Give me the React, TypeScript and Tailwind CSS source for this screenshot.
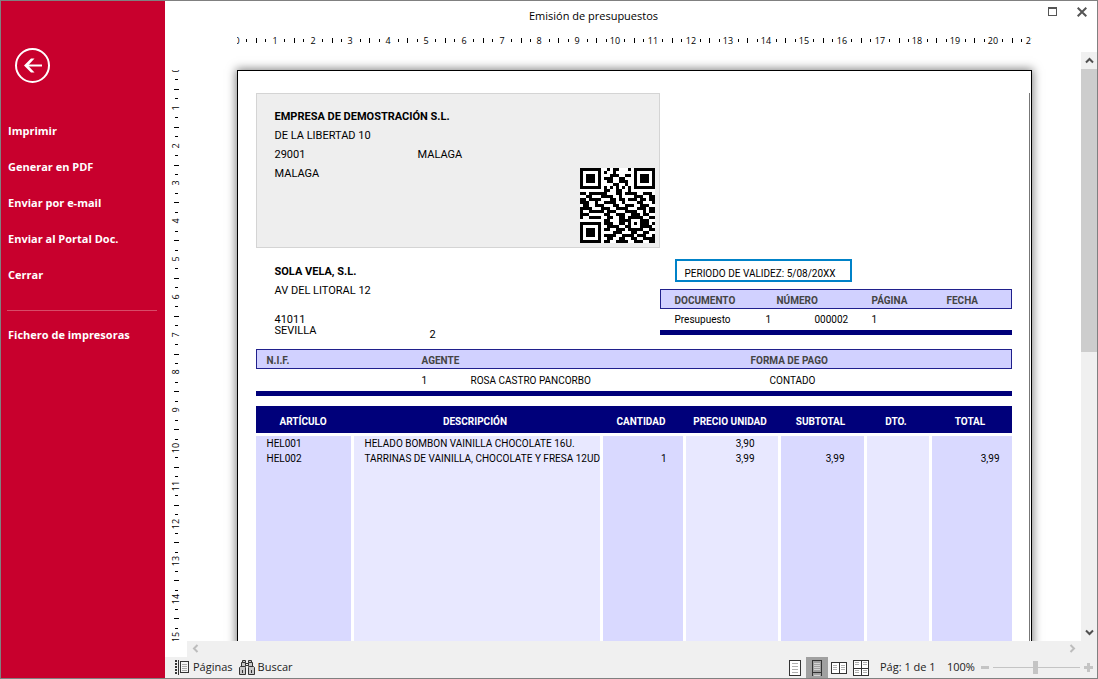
import type { ReactNode } from 'react'

// ── data ───────────────────────────────────────────────────────────────────

const MENU = ['Imprimir', 'Generar en PDF', 'Enviar por e-mail', 'Enviar al Portal Doc.', 'Cerrar']

const COLUMNS = [
  { title: 'ARTÍCULO', width: 'w-[95px]', cell: 'bg-[#d9d9ff] pl-[11px] text-left' },
  { title: 'DESCRIPCIÓN', width: 'w-[249px]', cell: 'border-l-[3px] bg-[#e8e8ff] pl-[11px] text-left' },
  { title: 'CANTIDAD', width: 'w-[83px]', cell: 'border-l-[3px] bg-[#d9d9ff] pr-4 text-right' },
  { title: 'PRECIO UNIDAD', width: 'w-[95px]', cell: 'border-l-[3px] bg-[#e8e8ff] pr-[23px] text-right' },
  { title: 'SUBTOTAL', width: 'w-[86px]', cell: 'border-l-[3px] bg-[#d9d9ff] pr-[19px] text-right' },
  { title: 'DTO.', width: 'w-[65px]', cell: 'border-l-[3px] bg-[#e8e8ff] pr-3 text-right' },
  { title: 'TOTAL', width: 'w-[83px]', cell: 'border-l-[3px] bg-[#d9d9ff] pr-3 text-right' },
]

const LINES = [
  ['HEL001', 'HELADO BOMBON VAINILLA CHOCOLATE 16U.', '', '3,90', '', '', ''],
  ['HEL002', 'TARRINAS DE VAINILLA, CHOCOLATE Y FRESA 12UD', '1', '3,99', '3,99', '', '3,99'],
]

const QR = [
  '1111111001011000101111111',
  '1000001010010000001000001',
  '1011101000111001101011101',
  '1011101011100110001011101',
  '1011101001100111001011101',
  '1000001000011001001000001',
  '1111111010101010101111111',
  '0000000011001100100000000',
  '1101111110001101111001110',
  '0011000111100100001110011',
  '1101111000110110111011011',
  '1110010011110010000110001',
  '0110011100011001110011100',
  '1111000111001111000111011',
  '1001111101110001111001011',
  '1110000011001110011101100',
  '1001111001100110111110011',
  '0000000011000111100011100',
  '1111111011100110101011101',
  '1000001001111001100011110',
  '1011101011001110111110011',
  '1011101000011100011001100',
  '1011101011110011110111001',
  '1000001001100110011001111',
  '1111111011001111001110011',
]

// ── rulers ─────────────────────────────────────────────────────────────────

const CM = 37.8

function Ruler({ length, count, vertical }: { length: number; count: number; vertical?: boolean }) {
  const marks = Array.from({ length: count * 4 + 1 }, (_, i) => i)
  return (
    <svg
      width={vertical ? 20 : length}
      height={vertical ? length : 20}
      className="block shrink-0 font-['Open_Sans',sans-serif] text-[9px]"
      shapeRendering="crispEdges"
    >
      {marks.map((i) => {
        const p = Math.round((i * CM) / 4)
        if (i % 4 === 0) {
          return vertical ? (
            <text key={i} transform={`translate(14 ${p}) rotate(-90)`} textAnchor="middle">{i / 4}</text>
          ) : (
            <text key={i} x={p} y={13} textAnchor="middle">{i / 4}</text>
          )
        }
        const size = i % 2 ? 3 : 5
        return vertical ? (
          <rect key={i} x={i % 2 ? 10 : 9} y={p} width={size} height={1} />
        ) : (
          <rect key={i} x={p} y={i % 2 ? 8 : 7} width={1} height={size} />
        )
      })}
    </svg>
  )
}

// ── icons ──────────────────────────────────────────────────────────────────

function QrCode() {
  return (
    <svg width="75" height="75" viewBox="0 0 25 25" shapeRendering="crispEdges" className="shrink-0 bg-white">
      {QR.map((row, y) =>
        [...row].map((c, x) => (c === '1' ? <rect key={`${x}-${y}`} x={x} y={y} width="1" height="1" /> : null)),
      )}
    </svg>
  )
}

function Chevron({ d, color }: { d: string; color: string }) {
  return (
    <svg width="9" height="9" viewBox="0 0 9 9" fill="none" stroke={color} strokeWidth="2">
      <path d={d} />
    </svg>
  )
}

function PagesIcon() {
  return (
    <svg width="14" height="15" viewBox="0 0 14 15" fill="none" shapeRendering="crispEdges">
      <path d="M1 0v15" stroke="#333" strokeWidth="2" strokeDasharray="2 1" />
      <path d="M3.5 0v15" stroke="#333" />
      <rect x="5.5" y="1.5" width="8" height="11" fill="#f4f4f4" stroke="#333" />
      <path d="M7 4.5h5M7 6.5h5M7 8.5h5M7 10.5h5" stroke="#aaa" />
    </svg>
  )
}

function BinocularsIcon() {
  return (
    <svg width="16" height="17" viewBox="0 0 16 17" fill="#c8c8c8" stroke="#333">
      <path d="M2.5 3.5h4v4h-4zM9.5 3.5h4v4h-4z" />
      <path d="M3.5 1.5h3v2h-3zM9.5 1.5h3v2h-3z" />
      <path d="M6.5 4.5h3v2h-3z" fill="#eee" />
      <path d="M.5 8.5l1-1h4l1 1v7h-6zM9.5 8.5l1-1h4l1 1v7h-6z" />
      <path d="M3.5 11v3M12.5 11v3" />
    </svg>
  )
}

function SinglePageIcon() {
  return (
    <svg width="12" height="16" viewBox="0 0 12 16" fill="none" shapeRendering="crispEdges">
      <rect x=".5" y=".5" width="11" height="15" fill="#fff" stroke="#333" />
      <path d="M3 3.5h6M3 6.5h6M3 9.5h6M3 12.5h6" stroke="#b0b0b0" />
    </svg>
  )
}

function ContinuousIcon() {
  return (
    <svg width="10" height="16" viewBox="0 0 10 16" fill="none" shapeRendering="crispEdges">
      <path d="M.5 16V.5h9V16M.5 12.5h9" stroke="#333" />
      <path d="M2 3.5h6M2 5.5h6M2 7.5h6M2 9.5h6M2 15.5h6" stroke="#d4d4d4" />
    </svg>
  )
}

function TwoPagesIcon() {
  return (
    <svg width="16" height="12" viewBox="0 0 16 12" fill="none" shapeRendering="crispEdges">
      <path d="M.5.5h15v11H.5zM8 .5v11" fill="#fff" stroke="#333" />
      <path d="M2 3.5h4M2 5.5h4M2 7.5h4M10 3.5h4M10 5.5h4M10 7.5h4" stroke="#b0b0b0" />
    </svg>
  )
}

function FourPagesIcon() {
  return (
    <svg width="16" height="16" viewBox="0 0 16 16" fill="none" shapeRendering="crispEdges">
      <path d="M.5.5h15v15H.5zM8 .5v15M.5 8h15" fill="#fff" stroke="#333" />
      <path d="M2 2.5h4M2 4.5h4M10 2.5h4M10 4.5h4M2 10.5h4M2 12.5h4M10 10.5h4M10 12.5h4" stroke="#b0b0b0" />
    </svg>
  )
}

// ── window parts ───────────────────────────────────────────────────────────

function Sidebar() {
  return (
    <nav className="flex w-[164px] shrink-0 flex-col bg-[#c8002d] pt-[47px] text-[11px] font-bold text-white">
      <button aria-label="Volver" className="ml-[14px] w-[35px]">
        <svg width="35" height="35" viewBox="0 0 35 35" fill="none" stroke="#fff">
          <circle cx="17.5" cy="17.5" r="16.5" strokeWidth="2" />
          <path d="M11 17.5h16" strokeWidth="2" />
          <path d="M9 17.5l7-7h3.5l-6.5 7 6.5 7H16z" fill="#fff" stroke="none" />
        </svg>
      </button>
      <div className="mt-[30px] flex flex-col">
        {MENU.map((label) => (
          <button key={label} className="h-9 pl-[7px] text-left">{label}</button>
        ))}
      </div>
      <hr className="ml-[6px] mr-2 mt-[17px] border-[#d84b68]" />
      <button className="mt-[6px] h-9 pl-[7px] text-left">Fichero de impresoras</button>
    </nav>
  )
}

function TitleBar() {
  return (
    <header className="flex h-[30px] items-center">
      <h1 className="flex-1 pr-[26px] text-center text-[11px]">Emisión de presupuestos</h1>
      <div className="mr-[10px] flex items-start gap-5 pb-2">
        <button aria-label="Maximizar">
          <svg width="9" height="9" viewBox="0 0 9 9" fill="none" stroke="#555" shapeRendering="crispEdges">
            <path d="M.5.5h8v8h-8zM0 1.5h9" />
          </svg>
        </button>
        <button aria-label="Cerrar ventana">
          <svg width="10" height="10" viewBox="0 0 10 10" stroke="#555" strokeWidth="2">
            <path d="M.7.7l8.6 8.6M9.3.7L.7 9.3" />
          </svg>
        </button>
      </div>
    </header>
  )
}

function Band({ children, className }: { children: ReactNode; className?: string }) {
  return (
    <th className={`h-5 border-y border-[#20208c] bg-[#d1d1ff] pt-[2px] text-left font-bold text-[#444] ${className}`}>
      {children}
    </th>
  )
}

function Company() {
  return (
    <section className="flex h-[155px] w-[404px] items-end justify-between border border-[#d4d4d4] bg-[#eee] pb-1 pl-[18px] pr-1 text-[11px] leading-[19px]">
      <div className="self-start pt-[13px]">
        <p className="font-bold">EMPRESA DE DEMOSTRACIÓN S.L.</p>
        <p>DE LA LIBERTAD 10</p>
        <p className="flex">
          <span className="w-[143px]">29001</span>
          <span>MALAGA</span>
        </p>
        <p>MALAGA</p>
      </div>
      <QrCode />
    </section>
  )
}

function DocumentInfo() {
  return (
    <div className="w-[352px] pt-[11px]">
      <p className="ml-[15px] h-[23px] w-[177px] border-2 border-[#0082c8] pl-2 pt-1 leading-[18px]">
        PERIODO DE VALIDEZ: 5/08/20XX
      </p>
      <table className="mt-[7px] w-full table-fixed border-separate border-spacing-0 border-b-[5px] border-[#00007a]">
        <thead>
          <tr>
            <Band className="w-[106px] border-l pl-[14px]">DOCUMENTO</Band>
            <Band className="w-[106px] pl-[11px]">NÚMERO</Band>
            <Band className="w-[75px]">PÁGINA</Band>
            <Band className="border-r">FECHA</Band>
          </tr>
        </thead>
        <tbody>
          <tr className="h-[21px]">
            <td className="pl-[15px]">Presupuesto</td>
            <td>
              <span className="inline-block w-[49px]">1</span>
              000002
            </td>
            <td>1</td>
            <td />
          </tr>
        </tbody>
      </table>
    </div>
  )
}

function AgentInfo() {
  return (
    <table className="mt-[13px] w-full table-fixed border-separate border-spacing-0 border-b-[5px] border-[#00007a]">
      <thead>
        <tr>
          <Band className="w-[166px] border-l pl-[10px]">N.I.F.</Band>
          <Band className="w-[329px]">AGENTE</Band>
          <Band className="border-r">FORMA DE PAGO</Band>
        </tr>
      </thead>
      <tbody>
        <tr className="h-[22px]">
          <td />
          <td>
            <span className="inline-block w-[49px]">1</span>
            ROSA CASTRO PANCORBO
          </td>
          <td className="pl-[19px]">CONTADO</td>
        </tr>
      </tbody>
    </table>
  )
}

function LinesTable() {
  return (
    <table className="mt-[10px] w-full table-fixed border-separate border-spacing-0">
      <thead>
        <tr className="h-[27px] bg-[#00007a] text-white">
          {COLUMNS.map((c) => (
            <th key={c.title} className={`${c.width} whitespace-nowrap pt-1 font-bold`}>{c.title}</th>
          ))}
        </tr>
        <tr className="h-[3px]" />
      </thead>
      <tbody>
        {LINES.map((line) => (
          <tr key={line[0]} className="h-[15px]">
            {COLUMNS.map((c, i) => (
              <td key={c.title} className={`whitespace-nowrap border-white ${c.cell}`}>{line[i]}</td>
            ))}
          </tr>
        ))}
        <tr className="h-[560px]">
          {COLUMNS.map((c) => (
            <td key={c.title} className={`border-white ${c.cell}`} />
          ))}
        </tr>
      </tbody>
    </table>
  )
}

function Paper() {
  return (
    <article className="h-[1123px] w-[795px] shrink-0 border border-black bg-white pr-px pt-[22px] font-['Roboto',sans-serif] text-[10px] leading-[15px] text-black shadow-[0_0_9px_1px_rgba(0,0,0,0.5)]">
      <div className="h-full border-r border-[#777] pl-[18px] pr-[17px]">
        <Company />
        <div className="flex justify-between">
          <address className="pl-[19px] pt-[14px] text-[11px] not-italic leading-[19px]">
            <p className="font-bold">SOLA VELA, S.L.</p>
            <p>AV DEL LITORAL 12</p>
            <div className="mt-[14px] flex items-end leading-[11px]">
              <p className="w-[155px]">
                41011
                <br />
                SEVILLA
              </p>
              <p className="-mb-1">2</p>
            </div>
          </address>
          <DocumentInfo />
        </div>
        <AgentInfo />
        <LinesTable />
      </div>
    </article>
  )
}

function StatusBar() {
  return (
    <footer className="flex h-[21px] items-center bg-[#f0f0f0] pl-[10px] pr-1 text-[11px] text-[#222]">
      <button className="flex items-center gap-1"><PagesIcon />Páginas</button>
      <button className="ml-[6px] flex items-center gap-[3px]"><BinocularsIcon />Buscar</button>
      <div className="ml-auto flex h-full items-center">
        <button aria-label="Una página"><SinglePageIcon /></button>
        <button aria-label="Continuo" className="ml-[5px] flex h-full w-[22px] items-center justify-center bg-[#a0a0a0]"><ContinuousIcon /></button>
        <button aria-label="Dos páginas" className="ml-[3px]"><TwoPagesIcon /></button>
        <button aria-label="Cuatro páginas" className="ml-[6px]"><FourPagesIcon /></button>
        <span className="ml-[11px] w-[67px] whitespace-nowrap">Pág: 1 de 1</span>
        <span className="w-[34px]">100%</span>
        <button aria-label="Reducir" className="h-[3px] w-2 bg-[#c4c4c4]" />
        <input
          type="range"
          aria-label="Zoom"
          defaultValue={49}
          className="mx-1 h-[14px] w-[87px] appearance-none bg-[linear-gradient(#c4c4c4,#c4c4c4)] bg-[length:100%_1px] bg-center bg-no-repeat [&::-webkit-slider-thumb]:h-[13px] [&::-webkit-slider-thumb]:w-[5px] [&::-webkit-slider-thumb]:appearance-none [&::-webkit-slider-thumb]:bg-[#c4c4c4]"
        />
        <button aria-label="Ampliar">
          <svg width="9" height="9" viewBox="0 0 9 9" stroke="#c4c4c4" strokeWidth="3">
            <path d="M4.5 0v9M0 4.5h9" />
          </svg>
        </button>
      </div>
    </footer>
  )
}

// ── main export ────────────────────────────────────────────────────────────

export default function App() {
  return (
    <div className="flex h-screen overflow-hidden border border-[#808080] bg-white font-['Open_Sans',sans-serif] text-black">
      <Sidebar />
      <div className="flex min-w-0 flex-1 flex-col">
        <TitleBar />
        <div className="flex h-[21px] justify-center pl-[22px] pr-4">
          <Ruler length={795} count={21} />
        </div>
        <main className="flex min-h-0 flex-1">
          <div className="w-[22px] shrink-0 overflow-hidden pt-[18px]">
            <Ruler length={571} count={15} vertical />
          </div>
          <div className="flex min-w-0 flex-1 flex-col">
            <div className="flex min-h-0 flex-1">
              <div className="flex min-w-0 flex-1 justify-center overflow-hidden pt-[18px]">
                <Paper />
              </div>
              <div className="flex w-4 shrink-0 flex-col bg-[#f0f0f0]">
                <button aria-label="Subir" className="flex h-[17px] shrink-0 items-center justify-center">
                  <Chevron d="M1 6.5L4.5 3L8 6.5" color="#505050" />
                </button>
                <div className="h-[48%] bg-[#cdcdcd]" />
                <button aria-label="Bajar" className="mt-auto flex h-[17px] shrink-0 items-center justify-center">
                  <Chevron d="M1 2.5L4.5 6L8 2.5" color="#505050" />
                </button>
              </div>
            </div>
            <div className="flex h-4 shrink-0 items-center justify-between bg-[#f0f0f0] pb-px pl-1 pr-5">
              <button aria-label="Izquierda"><Chevron d="M6.5 1L3 4.5L6.5 8" color="#bdbdbd" /></button>
              <button aria-label="Derecha"><Chevron d="M2.5 1L6 4.5L2.5 8" color="#bdbdbd" /></button>
            </div>
          </div>
        </main>
        <StatusBar />
      </div>
    </div>
  )
}
